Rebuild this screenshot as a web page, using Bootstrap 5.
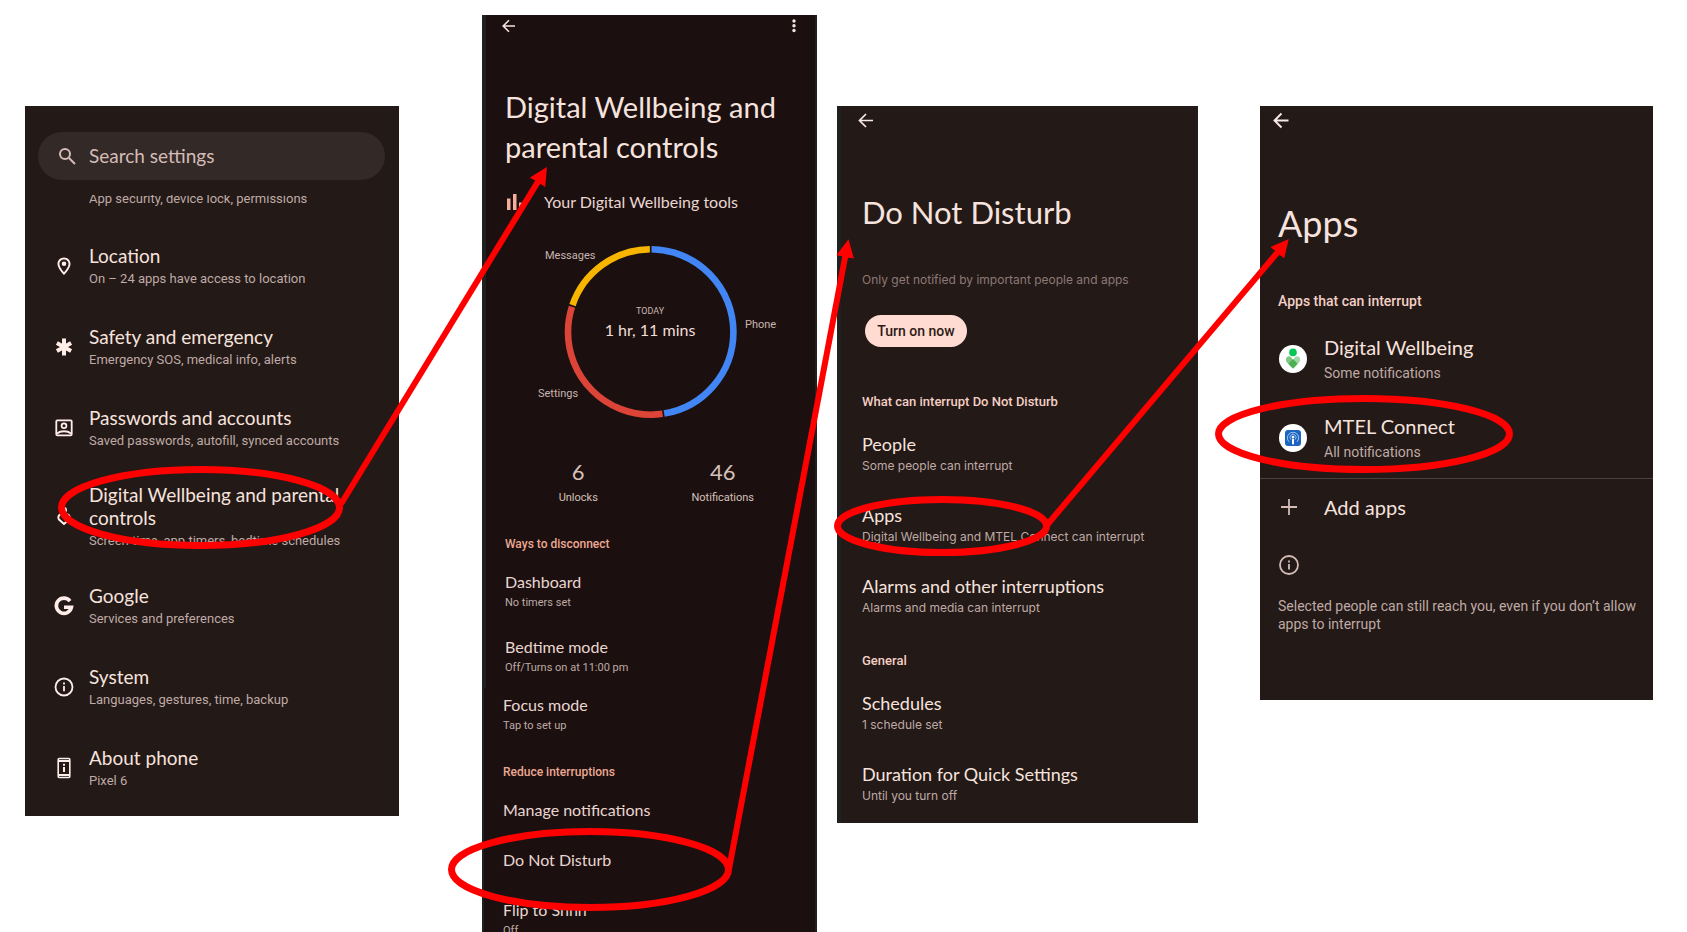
<!DOCTYPE html>
<html lang="en">
<head>
<meta charset="utf-8">
<meta name="viewport" content="width=device-width, initial-scale=1">
<title>Allow MTEL Connect through Do Not Disturb</title>
<link rel="stylesheet" href="https://cdn.jsdelivr.net/npm/bootstrap@5.3.0/dist/css/bootstrap.min.css">
<style>
  body { background: #fff; font-family: Lato, "Open Sans", sans-serif; }
  .board {
    display: grid;
    grid-template-columns: 25fr 374fr 83fr 335fr 20fr 361fr 62fr 393fr 34fr;
    align-items: start;
  }
  .screen { background: #231917; color: #f7e3de; margin-top: 106px; min-width: 0; }
  .screen a { color: inherit; text-decoration: none; }
  .screen h1 { font-weight: 400; margin: 0; }
  .screen svg { display: block; flex: none; }
  .sub { font-family: Roboto, "Open Sans", sans-serif; color: #bfaaa5; }
  .section-label { font-family: Roboto, "Open Sans", sans-serif; font-weight: 500; color: #f3cfc5; }
  .item { display: block; }

  /* settings list */
  .s-settings { grid-column: 2; min-height: 710px; padding-top: 26px; }
  .search { background: #332927; border-radius: 24px; height: 48px; margin: 0 14px 0 13px; padding-left: 20px; color: #d3bcb6; }
  .search input { background: none; border: 0; outline: 0; color: inherit; font-size: 19px; width: 100%; padding: 0; margin-left: 13px; }
  .search input::placeholder { color: #d3bcb6; opacity: 1; }
  .cut-row { margin-top: 15px; height: 14px; overflow: hidden; padding-left: 64px; display: flex; align-items: flex-end; }
  .s-settings nav { padding-top: 17px; }
  .set-row { display: flex; align-items: center; min-height: 81px; padding: 14px 0 15px 27px; }
  .set-row .glyph { width: 24px; margin-right: 13px; }
  .set-row .name { font-size: 19px; line-height: 23px; }
  .s-settings .sub { font-size: 13px; line-height: 20px; }
  .set-row .sub { margin-top: 2px; }

  /* digital wellbeing */
  .s-wellbeing { grid-column: 4; background: #1b100f; margin-top: 15px; min-height: 930px; border-right: 2px solid #1f2020; }
  .strip { border-left: 4px solid #1f2020; padding-left: 19px; }
  .strip-thin { border-left: 2px solid #1f2020; padding-left: 19px; }
  .strip.bar { padding: 0 16px; }
  .s-wellbeing h1 { font-size: 29px; line-height: 40px; padding-top: 50px; }
  .tools { padding-left: 2px; gap: 21px; }
  .s-wellbeing .name { font-size: 16px; line-height: 22px; color: #ead6d1; }
  .s-wellbeing .sub { font-size: 11px; line-height: 16px; }
  .s-wellbeing .item .sub { margin-top: 2px; }
  .s-wellbeing .section-label { font-size: 12px; line-height: 16px; color: #eda892; padding-top: 30px; }
  .s-wellbeing .item { padding-top: 25px; }
  .s-wellbeing .section-label + .item { padding-top: 19px; }
  .s-wellbeing .item.tight { padding-top: 6px; }
  .s-wellbeing .item.single { padding-top: 28px; }
  .counts { padding: 6px 20px 0; }
  .counts .sub { color: #d6c0ba; margin-top: 4px; }
  .count { font-size: 22px; line-height: 28px; color: #d6c0ba; }

  /* do not disturb */
  .s-dnd { grid-column: 6; min-height: 717px; border-left: 4px solid #1f2020; border-right: 1px solid #1f2020; }
  .s-dnd .back { padding-left: 17px; }
  .s-dnd .body { padding: 56px 10px 0 21px; }
  .s-dnd h1 { font-size: 31px; line-height: 40px; }
  .s-dnd .name { font-size: 18px; line-height: 22px; }
  .s-dnd .sub { font-family: Inter, Roboto, sans-serif; font-size: 12px; line-height: 20px; }
  .s-dnd .item .sub { margin-top: 1px; }
  .s-dnd .intro { color: #8c7975; padding: 38px 0 25px; }
  .s-dnd .section-label { font-size: 13px; line-height: 20px; padding-top: 33px; }
  .s-dnd .item { padding-top: 28px; }
  .s-dnd .section-label + .item { padding-top: 21px; }
  .turn-on { background: #ffdbd1; color: #2c1a16; border: 0; border-radius: 16px; height: 32px; width: 102px; padding: 0; font: 500 14px Roboto, sans-serif; margin: 0 0 12px 3px; display: block; }

  /* apps */
  .s-apps { grid-column: 8; min-height: 594px; }
  .s-apps .back { padding-left: 13px; }
  .s-apps h1 { font-size: 36px; line-height: 44px; padding: 65px 0 0 18px; }
  .s-apps .name { font-size: 20px; line-height: 24px; }
  .s-apps .sub { font-size: 14px; line-height: 20px; }
  .s-apps .section-label { font-size: 14px; line-height: 20px; padding: 46px 0 0 18px; }
  .app-row { display: flex; align-items: center; gap: 17px; padding: 0 0 0 19px; }
  .app-row .sub { margin-top: 4px; }
  .app-row .glyph { width: 28px; }
  .app-row.first { margin: 24px 0 31px; }
  .rule { border-top: 1px solid #4b403e; margin: 16px 0; }
  .s-apps .info { margin: 36px 0 22px 19px; }
  .s-apps .note { line-height: 18px; padding: 0 12px 0 18px; }

  .marks { position: absolute; top: 0; left: 0; width: 100%; height: 932px; pointer-events: none; }
</style>
</head>
<body>
<main class="position-relative vh-100 overflow-hidden">
  <div class="board">

    <section class="screen s-settings">
      <div class="search d-flex align-items-center">
        <svg width="18" height="18" viewBox="0 0 18 18" fill="none" stroke="#d3bcb6" stroke-width="2"><circle cx="7" cy="7" r="5"/><path d="M10.700 10.700 17 17"/></svg>
        <input type="search" placeholder="Search settings" aria-label="Search settings">
      </div>
      <div class="cut-row"><div class="sub">App security, device lock, permissions</div></div>
      <nav>
        <a class="set-row" href="#">
          <span class="glyph"><svg width="24" height="24" viewBox="0 0 24 24" fill="#ffede8"><path d="M12 3.500c-3.600 0-6.500 2.800-6.500 6.400 0 4.300 6.500 11.100 6.500 11.100s6.500-6.800 6.500-11.100c0-3.600-2.900-6.400-6.500-6.400zm0 1.900c2.500 0 4.600 2 4.600 4.500 0 2.300-2.300 5.700-4.600 8.300-2.300-2.600-4.600-6-4.600-8.300 0-2.500 2.100-4.500 4.600-4.500z"/><circle cx="12" cy="9.800" r="2.300"/></svg></span>
          <span><span class="name d-block">Location</span><span class="sub d-block">On – 24 apps have access to location</span></span>
        </a>
        <a class="set-row" href="#">
          <span class="glyph"><svg width="24" height="24" viewBox="0 0 24 24" stroke="#ffede8" stroke-width="4"><path d="M12 3.500v17M4.900 8l14.200 8M19.100 8 4.900 16"/></svg></span>
          <span><span class="name d-block">Safety and emergency</span><span class="sub d-block">Emergency SOS, medical info, alerts</span></span>
        </a>
        <a class="set-row" href="#">
          <span class="glyph"><svg width="24" height="24" viewBox="0 0 24 24" fill="none" stroke="#ffede8" stroke-width="1.800"><rect x="4.300" y="4.300" width="15.400" height="15" rx="1"/><circle cx="12" cy="9.700" r="2.400"/><path d="M5 17.500c3.500-3 10.500-3 14 0"/></svg></span>
          <span><span class="name d-block">Passwords and accounts</span><span class="sub d-block">Saved passwords, autofill, synced accounts</span></span>
        </a>
        <a class="set-row" href="#">
          <span class="glyph"><svg width="24" height="24" viewBox="0 0 24 24" fill="none" stroke="#ffede8" stroke-width="2"><path d="m12 19-5-4.500c-1.500-1.800-.5-5 2-5 1.400 0 2.300.6 3 1.600.7-1 1.600-1.600 3-1.600 2.500 0 3.500 3.200 2 5z"/><circle cx="12" cy="5" r="2"/></svg></span>
          <span><span class="name d-block">Digital Wellbeing and parental<br>controls</span><span class="sub d-block">Screen time, app timers, bedtime schedules</span></span>
        </a>
        <a class="set-row" href="#">
          <span class="glyph"><svg width="24" height="24" viewBox="0 0 24 24" fill="none" stroke="#ffede8" stroke-width="3.600"><path d="M18 7.100A7.600 7.600 0 1 0 19.400 13.300H12"/></svg></span>
          <span><span class="name d-block">Google</span><span class="sub d-block">Services and preferences</span></span>
        </a>
        <a class="set-row" href="#">
          <span class="glyph"><svg width="24" height="24" viewBox="0 0 24 24" fill="none" stroke="#ffede8" stroke-width="1.800"><circle cx="12" cy="12" r="8.500"/><path d="M12 11v5.300M12 7.500v2"/></svg></span>
          <span><span class="name d-block">System</span><span class="sub d-block">Languages, gestures, time, backup</span></span>
        </a>
        <a class="set-row" href="#">
          <span class="glyph"><svg width="24" height="24" viewBox="0 0 24 24" fill="none" stroke="#ffede8" stroke-width="1.600"><rect x="6.200" y="2.500" width="11.600" height="19" rx="1"/><path d="M6 5h12M6 19h12" stroke-width="2.200"/><path d="M12 11v5M12 7.800v2" stroke-width="2"/></svg></span>
          <span><span class="name d-block">About phone</span><span class="sub d-block">Pixel 6</span></span>
        </a>
      </nav>
    </section>

    <section class="screen s-wellbeing">
      <div class="strip bar d-flex justify-content-between">
        <svg width="14" height="22" viewBox="0 0 14 22" fill="none" stroke="#f7e3de" stroke-width="1.600"><path d="M13 11H1.500M7 5.200 1.200 11 7 16.800"/></svg>
        <svg width="10" height="22" viewBox="0 0 10 22" fill="#f7e3de"><circle cx="5" cy="6" r="1.700"/><circle cx="5" cy="10.700" r="1.700"/><circle cx="5" cy="15.500" r="1.700"/></svg>
      </div>
      <div class="strip">
        <h1>Digital Wellbeing and<br>parental controls</h1>
        <div class="tools d-flex align-items-center pt-4">
          <svg width="16" height="16" viewBox="0 0 16 16" fill="#f5ae99"><path d="M0 4.500h3.500V16H0zM6 0h3.500v16H6zM12 8.500h3.500V16H12z"/></svg>
          <span class="name">Your Digital Wellbeing tools</span>
        </div>
      </div>
      <div class="strip ps-0">
        <svg class="w-100" height="239" viewBox="4 -27 329 239" font-family="Roboto, sans-serif" fill="#c9b4af" font-size="11">
          <g fill="none" stroke-width="6.600" transform="rotate(-90 168.700 92)">
            <circle cx="168.700" cy="92" r="82.700" pathLength="360" stroke="#4285f4" stroke-dasharray="170 190" stroke-dashoffset="-.6"/>
            <circle cx="168.700" cy="92" r="82.700" pathLength="360" stroke="#db4437" stroke-dasharray="116.200 243.800" stroke-dashoffset="-171.700"/>
            <circle cx="168.700" cy="92" r="82.700" pathLength="360" stroke="#f8b500" stroke-dasharray="70.400 289.600" stroke-dashoffset="-289"/>
          </g>
          <text x="63" y="19">Messages</text>
          <text x="263" y="88">Phone</text>
          <text x="56" y="157">Settings</text>
          <text x="168" y="74" font-size="9" text-anchor="middle">TODAY</text>
          <text x="168" y="96" font-size="16" fill="#f2ded9" font-family="Lato, sans-serif" text-anchor="middle">1 hr, 11 mins</text>
        </svg>
        <div class="counts d-flex text-center">
          <div class="w-50"><div class="count">6</div><div class="sub">Unlocks</div></div>
          <div class="w-50"><div class="count">46</div><div class="sub">Notifications</div></div>
        </div>
      </div>
      <div class="strip pb-2">
        <div class="section-label">Ways to disconnect</div>
        <a class="item" href="#"><span class="name d-block">Dashboard</span><span class="sub d-block">No timers set</span></a>
        <a class="item pb-1" href="#"><span class="name d-block">Bedtime mode</span><span class="sub d-block">Off/Turns on at 11:00 pm</span></a>
      </div>
      <div class="strip-thin">
        <a class="item tight" href="#"><span class="name d-block">Focus mode</span><span class="sub d-block">Tap to set up</span></a>
        <div class="section-label">Reduce interruptions</div>
        <a class="item" href="#"><span class="name d-block">Manage notifications</span></a>
        <a class="item single" href="#"><span class="name d-block">Do Not Disturb</span></a>
        <a class="item single" href="#"><span class="name d-block">Flip to Shhh</span><span class="sub d-block">Off</span></a>
      </div>
    </section>

    <section class="screen s-dnd">
      <div class="back"><svg width="16" height="30" viewBox="0 0 16 30" fill="none" stroke="#f9e8e3" stroke-width="1.700"><path d="M15 14.500H1.500M8 8l-6.500 6.500L8 21"/></svg></div>
      <div class="body">
        <h1>Do Not Disturb</h1>
        <div class="sub intro">Only get notified by important people and apps</div>
        <button type="button" class="turn-on">Turn on now</button>
        <div class="section-label">What can interrupt Do Not Disturb</div>
        <a class="item" href="#"><span class="name d-block">People</span><span class="sub d-block">Some people can interrupt</span></a>
        <a class="item" href="#"><span class="name d-block">Apps</span><span class="sub d-block">Digital Wellbeing and MTEL Connect can interrupt</span></a>
        <a class="item" href="#"><span class="name d-block">Alarms and other interruptions</span><span class="sub d-block">Alarms and media can interrupt</span></a>
        <div class="section-label">General</div>
        <a class="item" href="#"><span class="name d-block">Schedules</span><span class="sub d-block">1 schedule set</span></a>
        <a class="item" href="#"><span class="name d-block">Duration for Quick Settings</span><span class="sub d-block">Until you turn off</span></a>
      </div>
    </section>

    <section class="screen s-apps">
      <div class="back"><svg width="16" height="30" viewBox="0 0 16 30" fill="none" stroke="#f9e8e3" stroke-width="1.900"><path d="M15.500 14.500H1.500M8.500 7.500l-7 7 7 7"/></svg></div>
      <h1>Apps</h1>
      <div class="section-label">Apps that can interrupt</div>
      <a class="app-row first" href="#">
        <span class="glyph"><svg width="28" height="28" viewBox="0 0 28 28"><circle cx="14" cy="14" r="14" fill="#fff"/><circle cx="14" cy="7.400" r="3.800" fill="#00c853"/><path d="m14 23.500-6-6c-3-3.500.5-8 4-5.500l5.500 8z" fill="#81c784"/><path d="m14 23.500 6-6c3-3.500-.5-8-4-5.500l-5.500 8z" fill="#a5d6a7"/><path d="m14 14 4.700 4.700L14 23.500l-4.700-4.800z" fill="#4caf50"/></svg></span>
        <span><span class="name d-block">Digital Wellbeing</span><span class="sub d-block">Some notifications</span></span>
      </a>
      <a class="app-row" href="#">
        <span class="glyph"><svg width="28" height="28" viewBox="0 0 28 28"><circle cx="14" cy="14" r="14" fill="#fff"/><rect x="6" y="6" width="16" height="16" rx="3" fill="#1d66c0"/><g fill="none" stroke="#a9cdf5" stroke-width=".9"><path d="M10 17.800a5.600 5.600 0 1 1 8 0M12 15.500a3 3 0 1 1 4 0"/></g><circle cx="14" cy="13" r="1.300" fill="#fff"/><rect x="13" y="14.500" width="2" height="6" rx="1" fill="#fff"/></svg></span>
        <span><span class="name d-block">MTEL Connect</span><span class="sub d-block">All notifications</span></span>
      </a>
      <div class="rule"></div>
      <a class="app-row" href="#">
        <span class="glyph"><svg width="20" height="20" viewBox="0 0 20 20" stroke="#d3bcb6" stroke-width="1.800"><path d="M10 2v16M2 10h16"/></svg></span>
        <span class="name">Add apps</span>
      </a>
      <svg class="info" width="20" height="20" viewBox="0 0 20 20" fill="none" stroke="#d3bcb6" stroke-width="1.800"><circle cx="10" cy="10" r="9"/><path d="M10 9v5.500M10 5.500v2"/></svg>
      <p class="sub note">Selected people can still reach you, even if you don’t allow apps to interrupt</p>
    </section>
  </div>

  <svg class="marks" viewBox="0 0 1687 932" preserveAspectRatio="none" fill="none" stroke="#f00" aria-hidden="true">
    <defs>
      <marker id="tip" markerUnits="userSpaceOnUse" markerWidth="20" markerHeight="20" refX="2" refY="9" orient="auto"><path d="M0 0 18 9 0 18z" fill="#f00" stroke="none"/></marker>
    </defs>
    <g stroke-width="7">
      <ellipse cx="200.500" cy="507.500" rx="139" ry="38"/>
      <ellipse cx="590" cy="869.500" rx="138.500" ry="38"/>
      <ellipse cx="942" cy="526" rx="104.500" ry="26.500"/>
      <ellipse cx="1364" cy="434" rx="145.500" ry="35.500"/>
    </g>
    <g stroke-width="6">
      <path d="M341 504 538.600 180.600" marker-end="url(#tip)"/>
      <path d="M729 869 845.500 255" marker-end="url(#tip)"/>
      <path d="M1047 525 1278.500 251.200" marker-end="url(#tip)"/>
    </g>
  </svg>
</main>
<script src="https://cdn.jsdelivr.net/npm/bootstrap@5.3.0/dist/js/bootstrap.bundle.min.js"></script>
</body>
</html>
